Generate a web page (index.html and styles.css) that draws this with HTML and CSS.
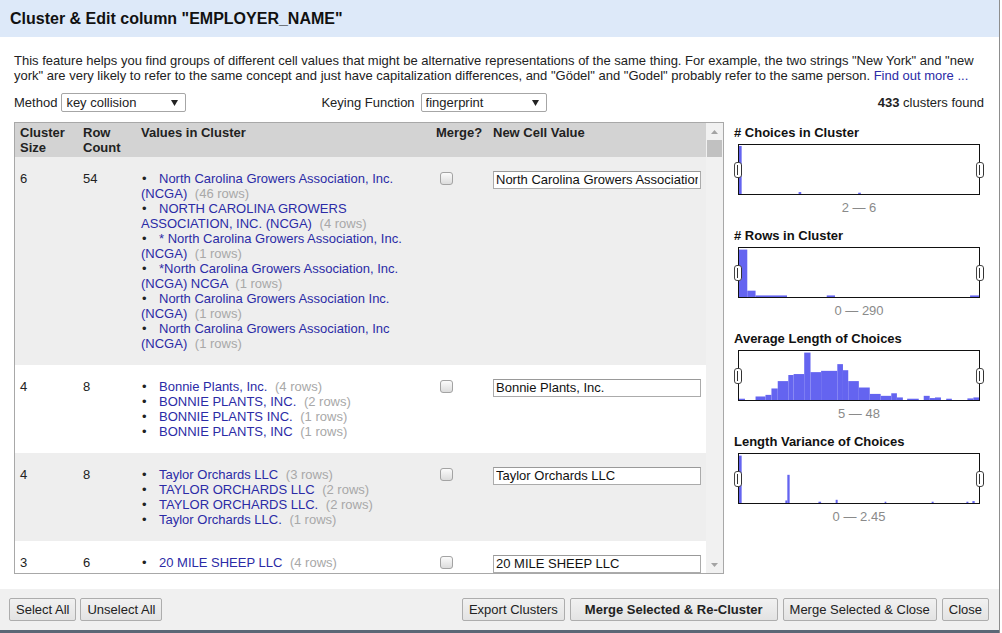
FILE: index.html
```html
<!DOCTYPE html>
<html>
<head>
<meta charset="utf-8">
<title>Cluster &amp; Edit</title>
<link rel="stylesheet" href="styles.css">
</head>
<body>
<div class="dialog">
  <div class="title">Cluster &amp; Edit column "EMPLOYER_NAME"</div>
  <div class="body">
    <p class="intro">This feature helps you find groups of different cell values that might be alternative representations of the same thing. For example, the two strings "New York" and "new york" are very likely to refer to the same concept and just have capitalization differences, and "Gödel" and "Godel" probably refer to the same person. <a class="link">Find out more ...</a></p>
    <div class="controls">
      <label class="ctl">Method
        <span class="select"><select><option>key collision</option></select><svg class="arrow" width="7" height="6" viewBox="0 0 7 6"><path d="M0 0H7L3.5 6Z"/></svg></span>
      </label>
      <label class="ctl keying">Keying Function
        <span class="select wide"><select><option>fingerprint</option></select><svg class="arrow" width="7" height="6" viewBox="0 0 7 6"><path d="M0 0H7L3.5 6Z"/></svg></span>
      </label>
      <div class="found"><b>433</b> clusters found</div>
    </div>
    <div class="main">
      <div class="grid-wrap">
        <div class="grid-scroll">
          <table class="grid">
            <colgroup><col class="c1"><col class="c2"><col class="c3"><col class="c4"><col class="c5"></colgroup>
            <thead>
              <tr><th>Cluster Size</th><th>Row Count</th><th>Values in Cluster</th><th>Merge?</th><th>New Cell Value</th></tr>
            </thead>
            <tbody>
              <tr class="odd">
                <td>6</td><td>54</td>
                <td><ul class="vals">
                  <li><a class="val">North Carolina Growers Association, Inc. (NCGA)</a> <span class="cnt">(46 rows)</span></li>
                  <li><a class="val">NORTH CAROLINA GROWERS ASSOCIATION, INC. (NCGA)</a> <span class="cnt">(4 rows)</span></li>
                  <li><a class="val">* North Carolina Growers Association, Inc. (NCGA)</a> <span class="cnt">(1 rows)</span></li>
                  <li><a class="val">*North Carolina Growers Association, Inc. (NCGA) NCGA</a> <span class="cnt">(1 rows)</span></li>
                  <li><a class="val">North Carolina Growers Association Inc. (NCGA)</a> <span class="cnt">(1 rows)</span></li>
                  <li><a class="val">North Carolina Growers Association, Inc (NCGA)</a> <span class="cnt">(1 rows)</span></li>
                </ul></td>
                <td><input class="chk" type="checkbox"></td>
                <td><input class="newval" type="text" value="North Carolina Growers Association, Inc. (NCGA)"></td>
              </tr>
              <tr>
                <td>4</td><td>8</td>
                <td><ul class="vals">
                  <li><a class="val">Bonnie Plants, Inc.</a> <span class="cnt">(4 rows)</span></li>
                  <li><a class="val">BONNIE PLANTS, INC.</a> <span class="cnt">(2 rows)</span></li>
                  <li><a class="val">BONNIE PLANTS INC.</a> <span class="cnt">(1 rows)</span></li>
                  <li><a class="val">BONNIE PLANTS, INC</a> <span class="cnt">(1 rows)</span></li>
                </ul></td>
                <td><input class="chk" type="checkbox"></td>
                <td><input class="newval" type="text" value="Bonnie Plants, Inc."></td>
              </tr>
              <tr class="odd">
                <td>4</td><td>8</td>
                <td><ul class="vals">
                  <li><a class="val">Taylor Orchards LLC</a> <span class="cnt">(3 rows)</span></li>
                  <li><a class="val">TAYLOR ORCHARDS LLC</a> <span class="cnt">(2 rows)</span></li>
                  <li><a class="val">TAYLOR ORCHARDS LLC.</a> <span class="cnt">(2 rows)</span></li>
                  <li><a class="val">Taylor Orchards LLC.</a> <span class="cnt">(1 rows)</span></li>
                </ul></td>
                <td><input class="chk" type="checkbox"></td>
                <td><input class="newval" type="text" value="Taylor Orchards LLC"></td>
              </tr>
              <tr>
                <td>3</td><td>6</td>
                <td><ul class="vals">
                  <li><a class="val">20 MILE SHEEP LLC</a> <span class="cnt">(4 rows)</span></li>
                </ul></td>
                <td><input class="chk" type="checkbox"></td>
                <td><input class="newval" type="text" value="20 MILE SHEEP LLC"></td>
              </tr>
            </tbody>
          </table>
        </div>
        <div class="vscroll">
          <div class="sb-btn"><svg width="7" height="4" viewBox="0 0 7 4"><path d="M3.5 0L7 4H0Z"/></svg></div>
          <div class="sb-track"><div class="sb-thumb"></div></div>
          <div class="sb-btn"><svg width="7" height="4" viewBox="0 0 7 4"><path d="M0 0H7L3.5 4Z"/></svg></div>
        </div>
      </div>
      <div class="facets">
        <div class="facet">
          <div class="facet-title"># Choices in Cluster</div>
          <div class="hist">
            <svg class="bars" viewBox="40 85 725 153" preserveAspectRatio="none">
              <rect x="40" y="88" width="8" height="150"/>
              <rect x="220" y="232" width="8" height="6"/>
              <rect x="400" y="234" width="8" height="4"/>
            </svg>
            <span class="handle hl"></span><span class="handle hr"></span>
          </div>
          <div class="range">2 — 6</div>
        </div>
        <div class="facet">
          <div class="facet-title"># Rows in Cluster</div>
          <div class="hist">
            <svg class="bars" viewBox="40 393 725 155" preserveAspectRatio="none">
              <rect x="40" y="398" width="25" height="150"/>
              <rect x="65" y="528" width="25" height="20"/>
              <rect x="90" y="543" width="95" height="5"/>
              <rect x="305" y="543" width="25" height="5"/>
              <rect x="738" y="543" width="27" height="5"/>
            </svg>
            <span class="handle hl"></span><span class="handle hr"></span>
          </div>
          <div class="range">0 — 290</div>
        </div>
        <div class="facet">
          <div class="facet-title">Average Length of Choices</div>
          <div class="hist">
            <svg class="bars" viewBox="40 58 725 153" preserveAspectRatio="none">
              <rect x="40" y="207" width="18" height="4"/>
              <rect x="90" y="200" width="30" height="11"/>
              <rect x="120" y="195" width="18" height="16"/>
              <rect x="138" y="175" width="19" height="36"/>
              <rect x="157" y="152" width="32" height="59"/>
              <rect x="189" y="133" width="16" height="78"/>
              <rect x="205" y="130" width="32" height="81"/>
              <rect x="237" y="63" width="19" height="148"/>
              <rect x="256" y="124" width="32" height="87"/>
              <rect x="288" y="120" width="49" height="91"/>
              <rect x="337" y="99" width="17" height="112"/>
              <rect x="354" y="118" width="16" height="93"/>
              <rect x="370" y="152" width="32" height="59"/>
              <rect x="402" y="172" width="33" height="39"/>
              <rect x="435" y="192" width="33" height="19"/>
              <rect x="468" y="198" width="32" height="13"/>
              <rect x="500" y="190" width="17" height="21"/>
              <rect x="517" y="203" width="18" height="8"/>
              <rect x="548" y="207" width="35" height="4"/>
              <rect x="598" y="198" width="18" height="13"/>
              <rect x="616" y="205" width="16" height="6"/>
              <rect x="632" y="203" width="18" height="8"/>
              <rect x="666" y="207" width="17" height="4"/>
              <rect x="730" y="206" width="18" height="5"/>
              <rect x="748" y="203" width="17" height="8"/>
            </svg>
            <span class="handle hl"></span><span class="handle hr"></span>
          </div>
          <div class="range">5 — 48</div>
        </div>
        <div class="facet">
          <div class="facet-title">Length Variance of Choices</div>
          <div class="hist">
            <svg class="bars" viewBox="40 367 725 153" preserveAspectRatio="none">
              <rect x="40" y="372" width="8" height="148"/>
              <rect x="180" y="512" width="6" height="8"/>
              <rect x="186" y="432" width="7" height="88"/>
              <rect x="280" y="516" width="8" height="4"/>
              <rect x="332" y="510" width="6" height="10"/>
              <rect x="480" y="516" width="5" height="4"/>
              <rect x="622" y="516" width="6" height="4"/>
              <rect x="727" y="516" width="6" height="4"/>
              <rect x="745" y="514" width="7" height="6"/>
            </svg>
            <span class="handle hl"></span><span class="handle hr"></span>
          </div>
          <div class="range">0 — 2.45</div>
        </div>
      </div>
    </div>
  </div>
  <div class="footer">
    <div class="btn-group">
      <button class="btn">Select All</button>
      <button class="btn">Unselect All</button>
    </div>
    <div class="btn-group">
      <button class="btn">Export Clusters</button>
      <button class="btn primary">Merge Selected &amp; Re-Cluster</button>
      <button class="btn">Merge Selected &amp; Close</button>
      <button class="btn">Close</button>
    </div>
  </div>
</div>
</body>
</html>
```

FILE: styles.css
```css
* { box-sizing: border-box; }
html, body { margin: 0; padding: 0; background: #fff; }
body {
  width: 1002px;
  height: 633px;
  overflow: hidden;
  font-family: "Liberation Sans", Arial, sans-serif;
  font-size: 13px;
  line-height: 15px;
  color: #222;
}

.dialog {
  width: 1000px;
  height: 633px;
  border-right: 1px solid #8d8d8d;
  display: flex;
  flex-direction: column;
}

.title {
  flex: none;
  height: 37px;
  background: #dde9f9;
  padding-left: 10px;
  font-size: 16px;
  font-weight: bold;
  line-height: 37px;
  color: #111;
}

.body {
  flex: 1;
  min-height: 0;
  padding: 16px 15px 0 14px;
  display: flex;
  flex-direction: column;
}

.intro { margin: 0; height: 30px; }
.link { color: #2b2ba6; }

.controls {
  margin-top: 10px;
  height: 19px;
  display: flex;
  align-items: center;
}
.ctl { display: flex; align-items: center; white-space: nowrap; }
.ctl .select { margin-left: 4px; }
.keying { margin-left: 135px; }
.keying .select { margin-left: 6px; }
.found { margin-left: auto; }

.select { position: relative; display: inline-block; height: 19px; }
.select select {
  -webkit-appearance: none;
  appearance: none;
  width: 125px;
  height: 19px;
  border: 1px solid #a6a6a6;
  border-radius: 2px;
  background: #fff;
  padding: 0 0 0 4px;
  margin: 0;
  font-family: "Liberation Sans", Arial, sans-serif;
  font-size: 13px;
  color: #222;
  outline: none;
}
.select.wide select { width: 126px; }
.select .arrow { position: absolute; right: 8px; top: 7px; fill: #222; }

.main {
  margin-top: 10px;
  height: 452px;
  display: flex;
  gap: 10px;
}

.grid-wrap {
  width: 710px;
  height: 452px;
  border: 1px solid #a8a8a8;
  display: flex;
}
.grid-scroll { width: 691px; height: 450px; overflow: hidden; }

.grid {
  width: 691px;
  table-layout: fixed;
  border-collapse: collapse;
  border-spacing: 0;
}
.c1 { width: 63px; }
.c2 { width: 58px; }
.c3 { width: 295px; }
.c4 { width: 57px; }
.c5 { width: 218px; }

.grid th {
  background: #d3d3d3;
  font-weight: bold;
  text-align: left;
  vertical-align: top;
  padding: 2px 5px;
  color: #222;
}
.grid td {
  vertical-align: top;
  padding: 14px 5px;
}
.grid tr.odd td { background: #eeeeee; }

.vals { list-style: none; margin: 0; padding: 0; }
.vals li::before {
  content: "•";
  display: inline-block;
  width: 18px;
  padding-left: 1px;
  margin-right: -1px;
  color: #222;
}
.val { color: #2b2ba6; }
.cnt { color: #a8a8a8; margin-left: 4px; }

.chk {
  -webkit-appearance: none;
  appearance: none;
  display: block;
  width: 13px;
  height: 13px;
  margin: 1px 0 0 4px;
  border: 1px solid #a3a3a3;
  border-radius: 3px;
  background: linear-gradient(#fbfbfb, #dcdcdc);
}

.newval {
  display: block;
  width: 208px;
  height: 18px;
  margin: 0;
  padding: 0 2px 1px;
  border: 1px solid #ababab;
  border-top-color: #999;
  background: #fff;
  font-family: "Liberation Sans", Arial, sans-serif;
  font-size: 13px;
  color: #111;
  outline: none;
}

.vscroll {
  width: 17px;
  height: 450px;
  background: #f1f1f1;
  display: flex;
  flex-direction: column;
}
.sb-btn {
  height: 17px;
  flex: none;
  display: flex;
  align-items: center;
  justify-content: center;
  fill: #a3a3a3;
}
.sb-track { flex: 1; padding: 0 1px; }
.sb-thumb { width: 15px; height: 17px; background: #c1c1c1; }

.facets { width: 250px; padding-top: 3px; }
.facet { margin-bottom: 13px; }
.facet-title { font-weight: bold; color: #111; }
.hist {
  position: relative;
  width: 242px;
  height: 51px;
  margin: 4px 4px 0 4px;
  border: 1px solid #111;
  background: #fff;
}
.bars { display: block; width: 240px; height: 49px; fill: #6464f0; }
.handle {
  position: absolute;
  top: 50%;
  width: 8px;
  height: 16px;
  margin-top: -8px;
  border: 1px solid #444;
  border-radius: 3px;
  background: #fff;
}
.handle::after {
  content: "";
  position: absolute;
  left: 1.5px;
  top: 2px;
  width: 3px;
  height: 10px;
  border-left: 1px solid #333;
  border-right: 1px solid #333;
}
.hl { left: -5px; }
.hr { right: -5px; }
.range {
  width: 242px;
  margin: 5px 4px 0 4px;
  text-align: center;
  color: #8a8a8a;
}

.footer {
  flex: none;
  height: 44px;
  background: #f0f0f0;
  border-bottom: 3px solid #5b6776;
  padding: 0 10px 0 9px;
  display: flex;
  align-items: center;
  justify-content: space-between;
}
.btn-group { display: flex; gap: 4px; }
.btn-group + .btn-group { gap: 5px; }
.btn {
  height: 23px;
  margin: 0;
  padding: 0 6px;
  border: 1px solid #adadad;
  border-radius: 2px;
  background: linear-gradient(#f1f1f1, #e3e3e3);
  font-family: "Liberation Sans", Arial, sans-serif;
  font-size: 13px;
  line-height: 15px;
  color: #222;
}
.btn.primary { font-weight: bold; padding: 0 14px; }
```
